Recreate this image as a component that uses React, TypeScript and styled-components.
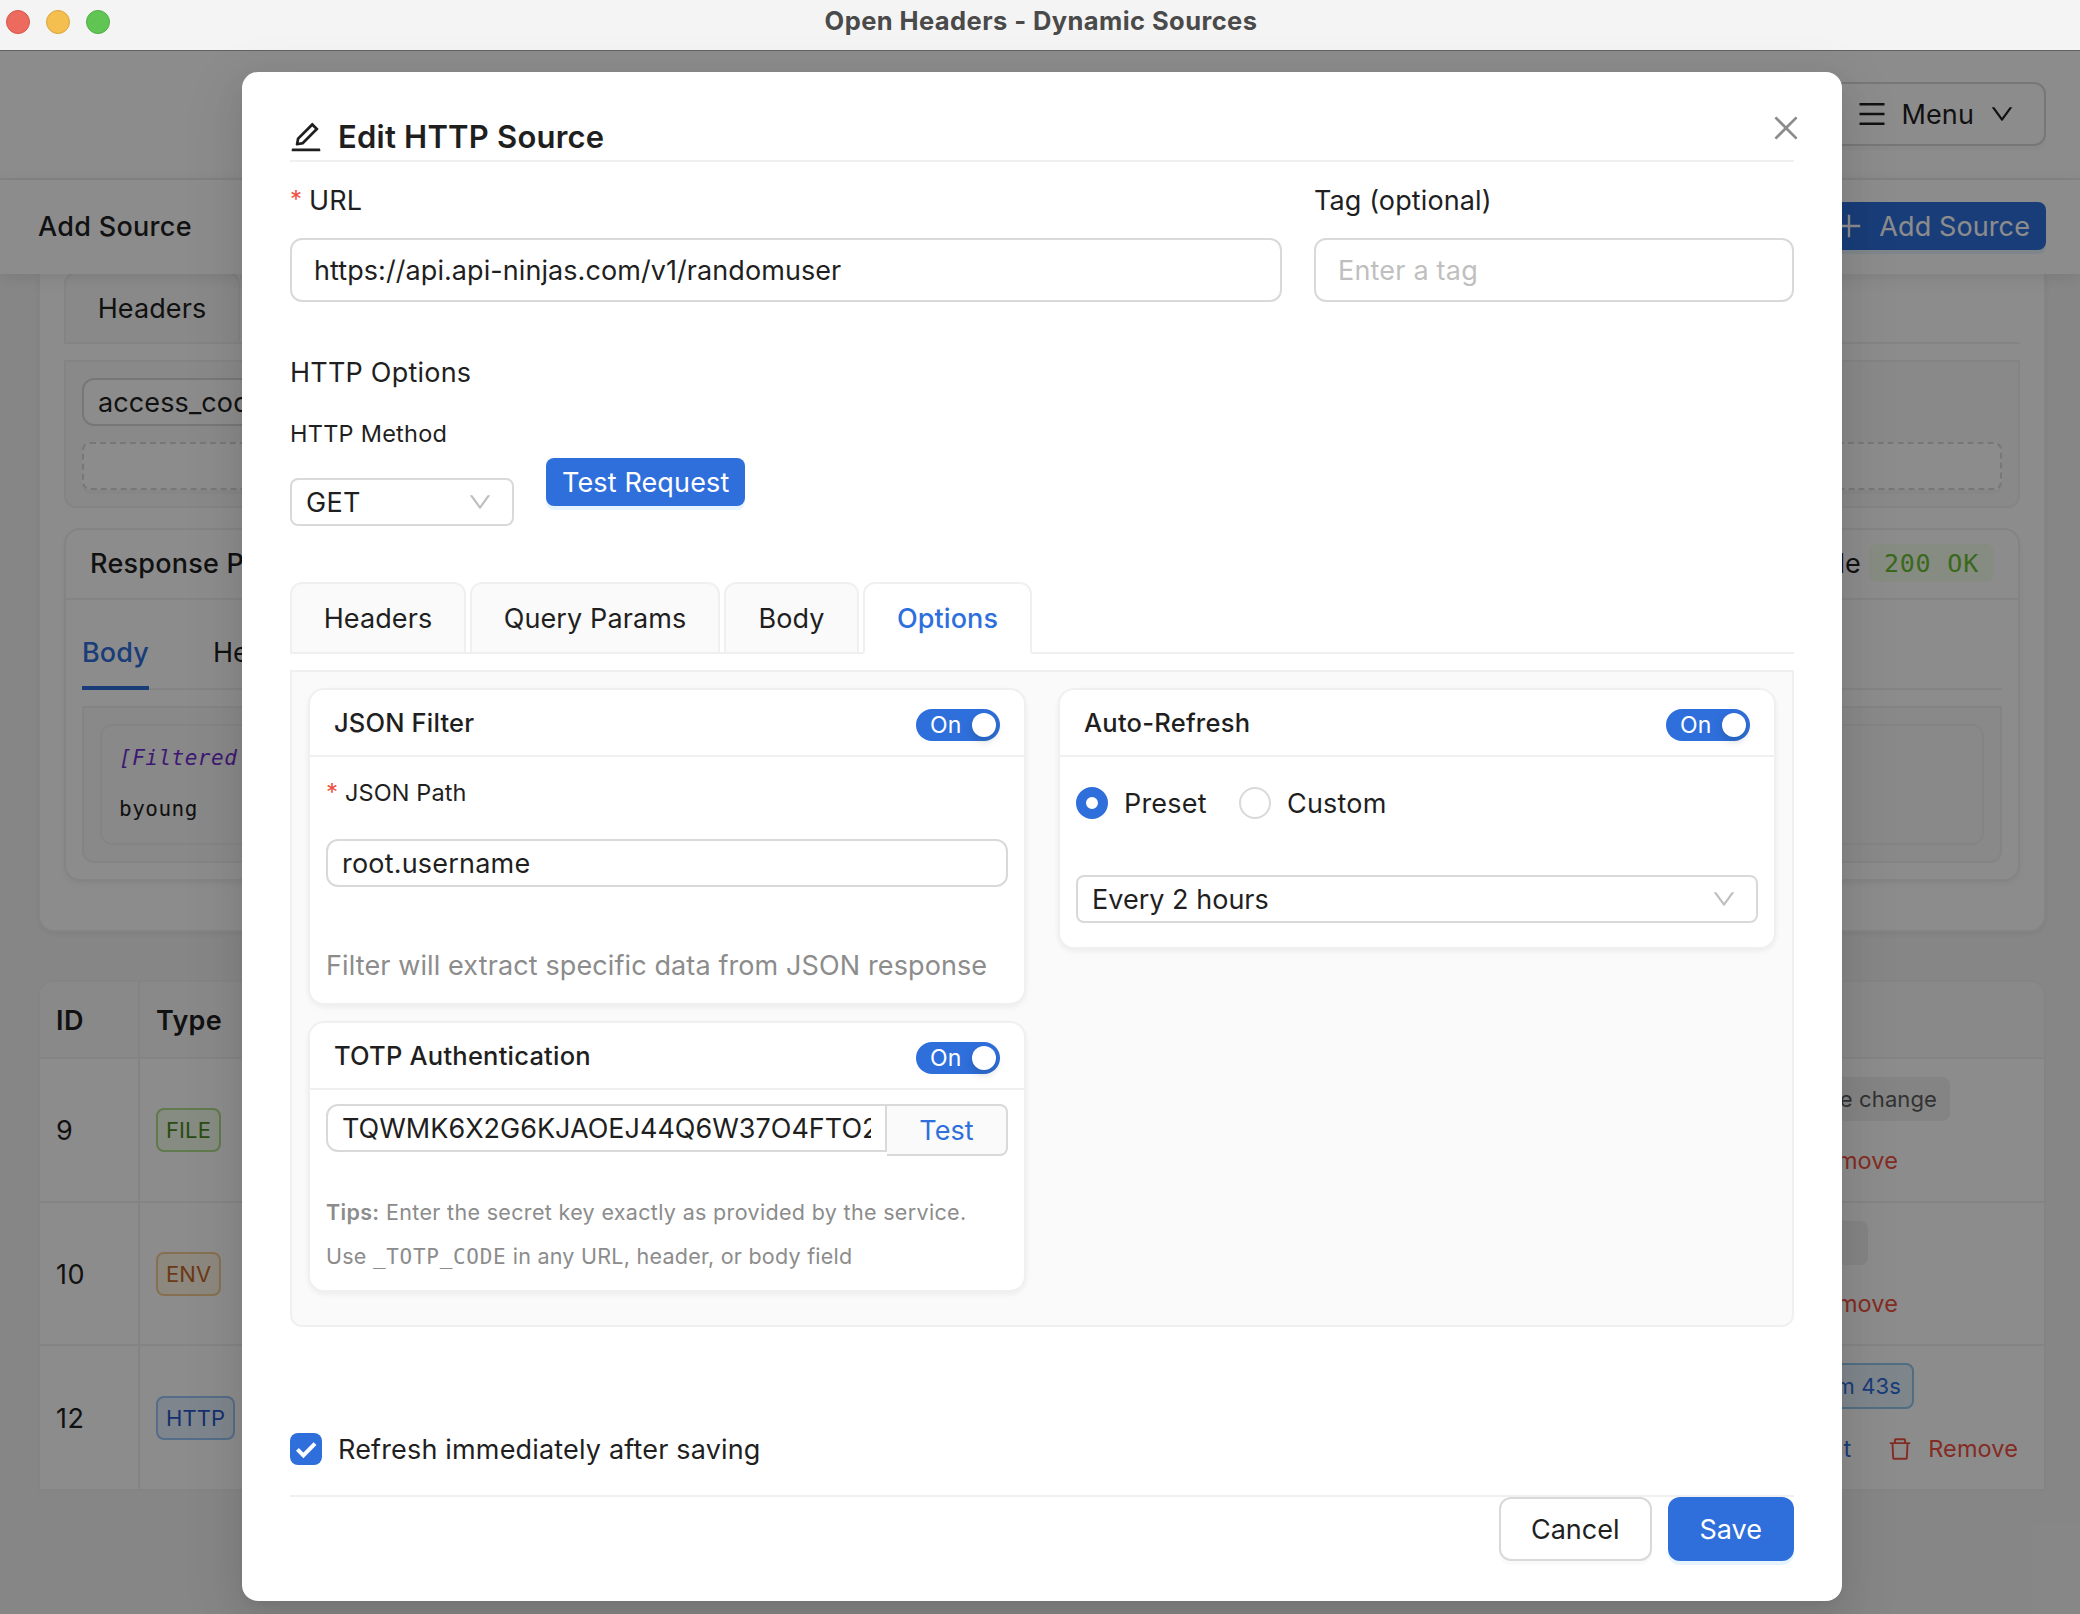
import React from "react";
import styled, { createGlobalStyle, css } from "styled-components";
import {
  AiOutlineClose,
  AiOutlineDelete,
  AiOutlineDown,
  AiOutlineEdit,
  AiOutlineMenu,
  AiOutlinePlus,
} from "react-icons/ai";

const BLUE = "#2f6fdc";
const RED = "#ee5142";
const LINE = "#f0f0f0";
const EDGE = "#d9d9d9";
const INK = "#1f1f1f";
const MUTED = "#8c8c8c";
const VIEW = "64 64 896 896";
const MONO = `"DejaVu Sans Mono", "Liberation Mono", monospace`;

const Global = createGlobalStyle`
  * { box-sizing: border-box; }
  body { margin: 0; background: #f5f5f5; }
`;

const Window = styled.div`
  position: relative;
  width: 2080px;
  height: 1614px;
  overflow: hidden;
  background: #f5f5f5;
  color: ${INK};
  font-family: Inter, "Liberation Sans", sans-serif;
  font-size: 27px;
  line-height: 44px;
  white-space: nowrap;
  svg { display: block; flex: none; }
`;

const Text = styled.span<{ $size?: number; $ls?: number; $weight?: number; $color?: string }>`
  ${(p) => !p.$size && css`display: inline-block; padding-top: 2px;`}
  font-size: ${(p) => p.$size ?? 27}px;
  letter-spacing: ${(p) => p.$ls ?? 0.11}px;
  font-weight: ${(p) => p.$weight ?? 400};
  ${(p) => p.$color && css`color: ${p.$color};`}
`;

/* ---------- title bar ---------- */

const TitleBar = styled.header`
  position: relative;
  display: flex;
  justify-content: center;
  height: 51px;
  padding: 0 0 8px 2px;
  align-items: center;
  background: #f4f4f4;
  border-bottom: 1px solid #616161;
  color: #4a4a4a;
`;

const Lights = styled.div`
  position: absolute;
  left: 6px;
  top: 10px;
  display: flex;
  gap: 16px;
`;

const Light = styled.i<{ $fill: string; $rim: string }>`
  width: 24px;
  height: 24px;
  border-radius: 50%;
  background: ${(p) => p.$fill};
  border: 1px solid ${(p) => p.$rim};
`;

/* ---------- page behind the dialog ---------- */

const TopBar = styled.div`
  display: flex;
  justify-content: flex-end;
  align-items: flex-start;
  height: 129px;
  padding: 31px 34px 0;
  background: #fff;
  border-bottom: 2px solid ${LINE};
`;

const MenuButton = styled.div`
  display: flex;
  align-items: center;
  gap: 16px;
  height: 64px;
  padding: 0 30px;
  border: 2px solid ${EDGE};
  border-radius: 12px;
  background: #fff;
  box-shadow: 0 4px 0 rgba(0, 0, 0, 0.02);
`;

const SubBar = styled.div`
  position: relative;
  z-index: 1;
  display: flex;
  justify-content: space-between;
  align-items: center;
  height: 94px;
  padding: 0 34px 2px 38px;
  background: #fff;
  box-shadow: 0 4px 16px rgba(0, 0, 0, 0.09);
`;

const Primary = styled.div<{ $large?: boolean }>`
  display: flex;
  align-items: center;
  justify-content: center;
  gap: 16px;
  height: ${(p) => (p.$large ? 64 : 48)}px;
  padding: 0 ${(p) => (p.$large ? 32 : 16)}px;
  border-radius: ${(p) => (p.$large ? 12 : 8)}px;
  background: ${BLUE};
  color: #fff;
  box-shadow: 0 4px 0 rgba(5, 145, 255, 0.1);
`;

const Page = styled.main`
  padding: 0 34px 0 38px;
  margin-top: -2px;
`;

const cardShadow = css`
  box-shadow: 0 2px 4px rgba(0, 0, 0, 0.03), 0 2px 12px -2px rgba(0, 0, 0, 0.02),
    0 4px 8px rgba(0, 0, 0, 0.02);
`;

const SourceCard = styled.section`
  height: 660px;
  padding: 0 24px;
  background: #fff;
  border: solid ${LINE};
  border-width: 0 2px 2px;
  border-radius: 0 0 16px 16px;
  ${cardShadow}
`;

const TabStrip = styled.div`
  display: flex;
  gap: 4px;
  height: 72px;
  box-shadow: inset 0 -2px 0 ${LINE};
`;

const CardTab = styled.div<{ $active?: boolean; $w: number }>`
  display: flex;
  align-items: center;
  justify-content: center;
  width: ${(p) => p.$w}px;
  border: 2px solid ${LINE};
  border-bottom-color: ${(p) => (p.$active ? "#fff" : LINE)};
  border-radius: 12px 12px 0 0;
  background: ${(p) => (p.$active ? "#fff" : "#fafafa")};
  color: ${(p) => (p.$active ? BLUE : INK)};
`;

const Pane = styled.div<{ $h?: number }>`
  margin-top: 16px;
  padding: 16px;
  ${(p) => p.$h && css`height: ${p.$h}px;`}
  background: #fafafa;
  border: 2px solid ${LINE};
  border-radius: 0 0 12px 12px;
`;

const Field = styled.div<{ $large?: boolean; $placeholder?: boolean; $joined?: boolean; $w?: string }>`
  display: flex;
  align-items: center;
  flex: 1;
  min-width: 0;
  width: ${(p) => p.$w ?? "auto"};
  height: ${(p) => (p.$large ? 64 : 48)}px;
  padding: 0 ${(p) => (p.$large ? 22 : 14)}px;
  border: 2px solid ${EDGE};
  border-radius: ${(p) => (p.$joined ? "12px 0 0 12px" : "12px")};
  background: #fff;
  color: ${(p) => (p.$placeholder ? "#bfbfbf" : INK)};
`;

const Clip = styled.div`
  flex: 1;
  min-width: 0;
  overflow: hidden;
`;

const DashedButton = styled.div`
  height: 48px;
  margin-top: 16px;
  border: 2px dashed ${EDGE};
  border-radius: 8px;
  background: #fff;
  box-shadow: 0 4px 0 rgba(0, 0, 0, 0.02);
`;

const ResponseCard = styled.div`
  margin-top: 20px;
  border: 2px solid ${LINE};
  border-radius: 16px;
  background: #fff;
  ${cardShadow}
`;

const ResponseHead = styled.div`
  display: flex;
  justify-content: space-between;
  align-items: center;
  height: 70px;
  padding: 0 24px 2px 24px;
  border-bottom: 2px solid ${LINE};
`;

const Status = styled.div`
  display: flex;
  align-items: center;
  gap: 8px;
`;

const OkTag = styled.div`
  display: flex;
  align-items: center;
  height: 38px;
  padding: 2px 15px 0;
  border-radius: 8px;
  background: #f6ffed;
  color: #6abf33;
  font-family: ${MONO};
`;

const ResponseBody = styled.div`
  padding: 0 16px 16px;
`;

const LineTabs = styled.div`
  display: flex;
  gap: 64px;
  height: 90px;
  box-shadow: inset 0 -2px 0 ${LINE};
`;

const LineTab = styled.div<{ $active?: boolean }>`
  display: flex;
  align-items: center;
  padding-top: 18px;
  border-bottom: 4px solid ${(p) => (p.$active ? BLUE : "transparent")};
  color: ${(p) => (p.$active ? BLUE : INK)};
`;

const Output = styled.div`
  height: 121px;
  padding: 4px 17px;
  border: 2px solid ${LINE};
  border-radius: 12px;
  font-family: ${MONO};
  line-height: 51px;
  em { color: #722ed1; }
  div { height: 51px; }
`;

const Table = styled.section`
  margin-top: 48px;
  border: 2px solid ${LINE};
  border-radius: 16px 16px 0 0;
  background: #fff;
  overflow: hidden;
`;

const Row = styled.div<{ $head?: boolean; $h: number }>`
  display: flex;
  height: ${(p) => p.$h}px;
  background: ${(p) => (p.$head ? "#fafafa" : "#fff")};
  & + & { border-top: 2px solid ${LINE}; }
`;

const Cell = styled.div<{ $w?: number }>`
  display: flex;
  align-items: center;
  ${(p) => (p.$w ? css`width: ${p.$w}px; border-right: 2px solid ${LINE};` : css`flex: 1;`)}
  padding-left: 16px;
`;

const ActionCell = styled.div<{ $top: number }>`
  display: flex;
  flex-direction: column;
  align-items: flex-end;
  padding-top: ${(p) => p.$top}px;
`;

const tones = {
  green: ["#f6ffed", "#b0dd8c", "#4a8a26"],
  orange: ["#fff7e6", "#f5cd94", "#c5682a"],
  blue: ["#e6f2ff", "#9cc6f7", "#2a56c8"],
  grey: ["#f0f0f0", "#f0f0f0", "#5c5c5c"],
  sky: ["#e6f4ff", "#93c8ee", BLUE],
} as const;

const Tag = styled.div<{ $tone: keyof typeof tones; $h?: number; $end?: number; $pad?: number }>`
  display: flex;
  align-items: center;
  height: ${(p) => p.$h ?? 44}px;
  padding: 0 ${(p) => p.$pad ?? 8}px;
  margin-right: ${(p) => p.$end ?? 0}px;
  border: 2px solid ${(p) => tones[p.$tone][1]};
  border-radius: 8px;
  background: ${(p) => tones[p.$tone][0]};
  color: ${(p) => tones[p.$tone][2]};
`;

const Actions = styled.div<{ $end: number; $gap: number }>`
  display: flex;
  align-items: center;
  height: 44px;
  margin: ${(p) => p.$gap}px ${(p) => p.$end}px 0 0;
`;

const Link = styled.div<{ $danger?: boolean }>`
  display: flex;
  align-items: center;
  gap: 16px;
  margin-left: 37px;
  color: ${(p) => (p.$danger ? RED : BLUE)};
`;

/* ---------- dialog ---------- */

const Mask = styled.div`
  position: absolute;
  inset: 51px 0 0 0;
  z-index: 2;
  padding: 21px 0 0 242px;
  background: rgba(0, 0, 0, 0.45);
`;

const Dialog = styled.div`
  position: relative;
  width: 1600px;
  height: 1529px;
  padding: 40px 48px 0;
  border-radius: 16px;
  background: #fff;
  box-shadow: 0 12px 32px rgba(0, 0, 0, 0.08), 0 6px 12px -8px rgba(0, 0, 0, 0.12),
    0 18px 56px 16px rgba(0, 0, 0, 0.05);
`;

const CloseButton = styled.div`
  position: absolute;
  right: 41px;
  top: 41px;
  color: ${MUTED};
`;

const DialogTitle = styled.div`
  display: flex;
  align-items: center;
  gap: 16px;
  height: 50px;
  padding-top: 2px;
  border-bottom: 2px solid ${LINE};
`;

const TopFields = styled.div`
  display: grid;
  grid-template-columns: 992px 480px;
  gap: 32px;
  margin-top: 16px;
`;

const Label = styled.div<{ $h?: number; $gap?: number }>`
  display: flex;
  align-items: center;
  height: ${(p) => p.$h ?? 44}px;
  margin-bottom: ${(p) => p.$gap ?? 16}px;
`;

const Star = styled.span`
  width: 19px;
  color: ${RED};
  font-size: 24px;
  line-height: 24px;
`;

const SectionTitle = styled.div`
  display: flex;
  align-items: center;
  height: 44px;
  margin-top: 48px;
`;

const MethodRow = styled.div`
  display: flex;
  align-items: flex-start;
  gap: 32px;
  margin: 18px 0 56px;
`;

const Select = styled.div<{ $w?: number }>`
  display: flex;
  align-items: center;
  justify-content: space-between;
  ${(p) => p.$w && css`width: ${p.$w}px;`}
  height: 48px;
  padding: 0 20px 0 14px;
  border: 2px solid ${EDGE};
  border-radius: 8px;
  background: #fff;
  svg { color: #bfbfbf; }
`;

const TestWrap = styled.div`
  padding-top: 46px;
`;

const Columns = styled.div`
  display: grid;
  grid-template-columns: 718px 718px;
  gap: 32px;
  align-items: start;
`;

const Stack = styled.div`
  display: grid;
  grid-template-columns: minmax(0, 1fr);
  gap: 16px;
`;

const OptionCard = styled.div`
  border: 2px solid ${LINE};
  border-radius: 16px;
  background: #fff;
  ${cardShadow}
`;

const OptionHead = styled.div`
  display: flex;
  align-items: center;
  justify-content: space-between;
  height: 67px;
  padding: 0 24px;
  border-bottom: 2px solid ${LINE};
`;

const OptionBody = styled.div<{ $pad: string }>`
  padding: ${(p) => p.$pad};
`;

const Switch = styled.div`
  display: flex;
  align-items: center;
  justify-content: space-between;
  width: 84px;
  height: 32px;
  margin-top: 5px;
  padding: 0 4px 0 14px;
  border-radius: 16px;
  background: ${BLUE};
  color: #fff;
  &::after {
    content: "";
    width: 24px;
    height: 24px;
    border-radius: 50%;
    background: #fff;
    box-shadow: 0 4px 8px rgba(0, 35, 11, 0.2);
  }
`;

const Hint = styled.div`
  display: flex;
  align-items: center;
  margin-top: 56px;
  height: 44px;
  color: ${MUTED};
`;

const Joined = styled.div`
  display: flex;
  align-items: flex-start;
`;

const Addon = styled.div`
  display: flex;
  align-items: center;
  justify-content: center;
  width: 121px;
  height: 52px;
  border: 2px solid ${EDGE};
  border-left: 0;
  border-radius: 0 8px 8px 0;
  background: #fafafa;
  color: ${BLUE};
`;

const Tips = styled.div`
  margin-top: 33px;
  padding-bottom: 1px;
  color: ${MUTED};
  div { height: 44px; }
  code { font-family: ${MONO}; font-size: 21px; letter-spacing: 0.7px; }
`;

const Radios = styled.div`
  display: flex;
  align-items: center;
  height: 44px;
  margin-bottom: 50px;
`;

const Radio = styled.i<{ $on?: boolean }>`
  width: 32px;
  height: 32px;
  margin-right: 16px;
  border-radius: 50%;
  border: ${(p) => (p.$on ? `10px solid ${BLUE}` : `2px solid ${EDGE}`)};
  background: #fff;
`;

const RadioLabel = styled.div<{ $w: number }>`
  width: ${(p) => p.$w}px;
`;

const CheckRow = styled.div`
  display: flex;
  align-items: center;
  gap: 16px;
  height: 32px;
  margin-top: 106px;
`;

const Checkbox = styled.i`
  width: 32px;
  height: 32px;
  border-radius: 8px;
  background: ${BLUE};
`;

const Footer = styled.div`
  display: flex;
  justify-content: flex-end;
  gap: 16px;
  margin-top: 30px;
  border-top: 2px solid ${LINE};
`;

const ToggleHead = ({ title, ls }: { title: string; ls: number }) => (
  <OptionHead>
    <Text $size={25.5} $weight={500} $ls={ls}>{title}</Text>
    <Switch><Text $size={23}>On</Text></Switch>
  </OptionHead>
);

export default function App() {
  return (
    <Window>
      <Global />
      <TitleBar>
        <Lights>
          <Light $fill="#ec6a5e" $rim="#d9554a" />
          <Light $fill="#f4bf4f" $rim="#dba63c" />
          <Light $fill="#61c554" $rim="#4fae43" />
        </Lights>
        <Text $size={25.5} $weight={700} $ls={0.42}>Open Headers - Dynamic Sources</Text>
      </TitleBar>

      <TopBar>
        <MenuButton>
          <AiOutlineMenu viewBox={VIEW} size={28} />
          <Text>Menu</Text>
          <AiOutlineDown viewBox={VIEW} size={24} />
        </MenuButton>
      </TopBar>
      <SubBar>
        <Text $weight={500} $ls={0.3}>Add Source</Text>
        <Primary>
          <AiOutlinePlus viewBox={VIEW} size={28} />
          <Text>Add Source</Text>
        </Primary>
      </SubBar>

      <Page>
        <SourceCard>
          <TabStrip>
            <CardTab $w={176}><Text>Headers</Text></CardTab>
            <CardTab $w={250}><Text>Query Params</Text></CardTab>
          </TabStrip>
          <Pane>
            <Field $w="800px"><Text>access_code</Text></Field>
            <DashedButton />
          </Pane>
          <ResponseCard>
            <ResponseHead>
              <Text $weight={500} $ls={0.25}>Response Preview</Text>
              <Status>
                <Text>Status Code</Text>
                <OkTag><Text $size={25} $ls={0.8}>200 OK</Text></OkTag>
              </Status>
            </ResponseHead>
            <ResponseBody>
              <LineTabs>
                <LineTab $active><Text $weight={500}>Body</Text></LineTab>
                <LineTab><Text>Headers</Text></LineTab>
              </LineTabs>
              <Pane>
                <Output>
                  <div><Text as="em" $size={21} $ls={0.5}>[Filtered Response]</Text></div>
                  <div><Text $size={21} $ls={0.5}>byoung</Text></div>
                </Output>
              </Pane>
            </ResponseBody>
          </ResponseCard>
        </SourceCard>

        <Table>
          <Row $head $h={75}>
            <Cell $w={100}><Text $weight={600} $ls={0.4}>ID</Text></Cell>
            <Cell><Text $weight={600} $ls={0.3}>Type</Text></Cell>
          </Row>
          <Row $h={144}>
            <Cell $w={100}><Text $ls={0.4}>9</Text></Cell>
            <Cell><Tag $tone="green"><Text $size={22}>FILE</Text></Tag></Cell>
            <ActionCell $top={18}>
              <Tag $tone="grey" $end={94} $pad={11}><Text $size={22}>On file change</Text></Tag>
              <Actions $end={146} $gap={18}>
                <Link $danger><AiOutlineDelete viewBox={VIEW} size={24} /><Text $size={23.5}>Remove</Text></Link>
              </Actions>
            </ActionCell>
          </Row>
          <Row $h={143}>
            <Cell $w={100}><Text $ls={0.4}>10</Text></Cell>
            <Cell><Tag $tone="orange"><Text $size={22}>ENV</Text></Tag></Cell>
            <ActionCell $top={18}>
              <Tag $tone="grey" $end={176} $pad={36}><Text $size={22}>Manual</Text></Tag>
              <Actions $end={146} $gap={17}>
                <Link $danger><AiOutlineDelete viewBox={VIEW} size={24} /><Text $size={23.5}>Remove</Text></Link>
              </Actions>
            </ActionCell>
          </Row>
          <Row $h={145}>
            <Cell $w={100}><Text $ls={0.4}>12</Text></Cell>
            <Cell><Tag $tone="blue"><Text $size={22}>HTTP</Text></Tag></Cell>
            <ActionCell $top={17}>
              <Tag $tone="sky" $h={46} $end={130} $pad={11}><Text $size={22}>1h 12m 43s</Text></Tag>
              <Actions $end={26} $gap={18}>
                <Link><Text $size={23.5}>Edit</Text></Link>
                <Link $danger><AiOutlineDelete viewBox={VIEW} size={24} /><Text $size={23.5}>Remove</Text></Link>
              </Actions>
            </ActionCell>
          </Row>
        </Table>
      </Page>

      <Mask>
        <Dialog>
          <CloseButton><AiOutlineClose viewBox={VIEW} size={30} /></CloseButton>
          <DialogTitle>
            <AiOutlineEdit viewBox={VIEW} size={32} />
            <Text $size={31} $weight={600} $ls={0.22}>Edit HTTP Source</Text>
          </DialogTitle>

          <TopFields>
            <div>
              <Label><Star>*</Star><Text>URL</Text></Label>
              <Field $large><Text $ls={0.07}>https://api.api-ninjas.com/v1/randomuser</Text></Field>
            </div>
            <div>
              <Label><Text>Tag (optional)</Text></Label>
              <Field $large $placeholder><Text $ls={0.2}>Enter a tag</Text></Field>
            </div>
          </TopFields>

          <SectionTitle><Text $ls={0.22}>HTTP Options</Text></SectionTitle>
          <MethodRow>
            <div>
              <Label $gap={22}><Text $size={23.5} $ls={0.25}>HTTP Method</Text></Label>
              <Select $w={224}><Text $ls={0.3}>GET</Text><AiOutlineDown viewBox={VIEW} size={24} /></Select>
            </div>
            <TestWrap><Primary><Text $ls={0.13}>Test Request</Text></Primary></TestWrap>
          </MethodRow>

          <TabStrip>
            <CardTab $w={176}><Text>Headers</Text></CardTab>
            <CardTab $w={250}><Text>Query Params</Text></CardTab>
            <CardTab $w={135}><Text>Body</Text></CardTab>
            <CardTab $w={169} $active><Text $weight={500}>Options</Text></CardTab>
          </TabStrip>

          <Pane $h={657}>
            <Columns>
              <Stack>
                <OptionCard>
                  <ToggleHead title="JSON Filter" ls={0.17} />
                  <OptionBody $pad="16px 16px 16px">
                    <Label $h={40} $gap={26}><Star>*</Star><Text $size={23.5} $ls={0.1}>JSON Path</Text></Label>
                    <Field><Text $ls={0.2}>root.username</Text></Field>
                    <Hint><Text>Filter will extract specific data from JSON response</Text></Hint>
                  </OptionBody>
                </OptionCard>
                <OptionCard>
                  <ToggleHead title="TOTP Authentication" ls={0.22} />
                  <OptionBody $pad="14px 16px 12px">
                    <Joined>
                      <Field $joined><Clip><Text $ls={0}>TQWMK6X2G6KJAOEJ44Q6W37O4FTO2ZSA</Text></Clip></Field>
                      <Addon><Text>Test</Text></Addon>
                    </Joined>
                    <Tips>
                      <div>
                        <Text $size={21.5} $weight={600} $ls={0.33}>Tips:</Text>
                        <Text $size={21.5} $ls={0.33}> Enter the secret key exactly as provided by the service.</Text>
                      </div>
                      <div>
                        <Text $size={21.5} $ls={0.25}>Use <code>_TOTP_CODE</code> in any URL, header, or body field</Text>
                      </div>
                    </Tips>
                  </OptionBody>
                </OptionCard>
              </Stack>
              <OptionCard>
                <ToggleHead title="Auto-Refresh" ls={0.25} />
                <OptionBody $pad="24px 16px">
                  <Radios>
                    <Radio $on />
                    <RadioLabel $w={115}><Text $ls={0.2}>Preset</Text></RadioLabel>
                    <Radio />
                    <RadioLabel $w={115}><Text $ls={0.2}>Custom</Text></RadioLabel>
                  </Radios>
                  <Select><Text $ls={0.02}>Every 2 hours</Text><AiOutlineDown viewBox={VIEW} size={24} /></Select>
                </OptionBody>
              </OptionCard>
            </Columns>
          </Pane>

          <CheckRow>
            <Checkbox>
              <svg width="32" height="32" viewBox="0 0 32 32" fill="none" stroke="#fff" strokeWidth="4">
                <path d="M7.4 16.3l6 6L25 10.6" />
              </svg>
            </Checkbox>
            <Text $ls={0.17}>Refresh immediately after saving</Text>
          </CheckRow>
          <Footer>
            <MenuButton><Text $ls={0}>Cancel</Text></MenuButton>
            <Primary $large><Text $ls={0}>Save</Text></Primary>
          </Footer>
        </Dialog>
      </Mask>
    </Window>
  );
}
